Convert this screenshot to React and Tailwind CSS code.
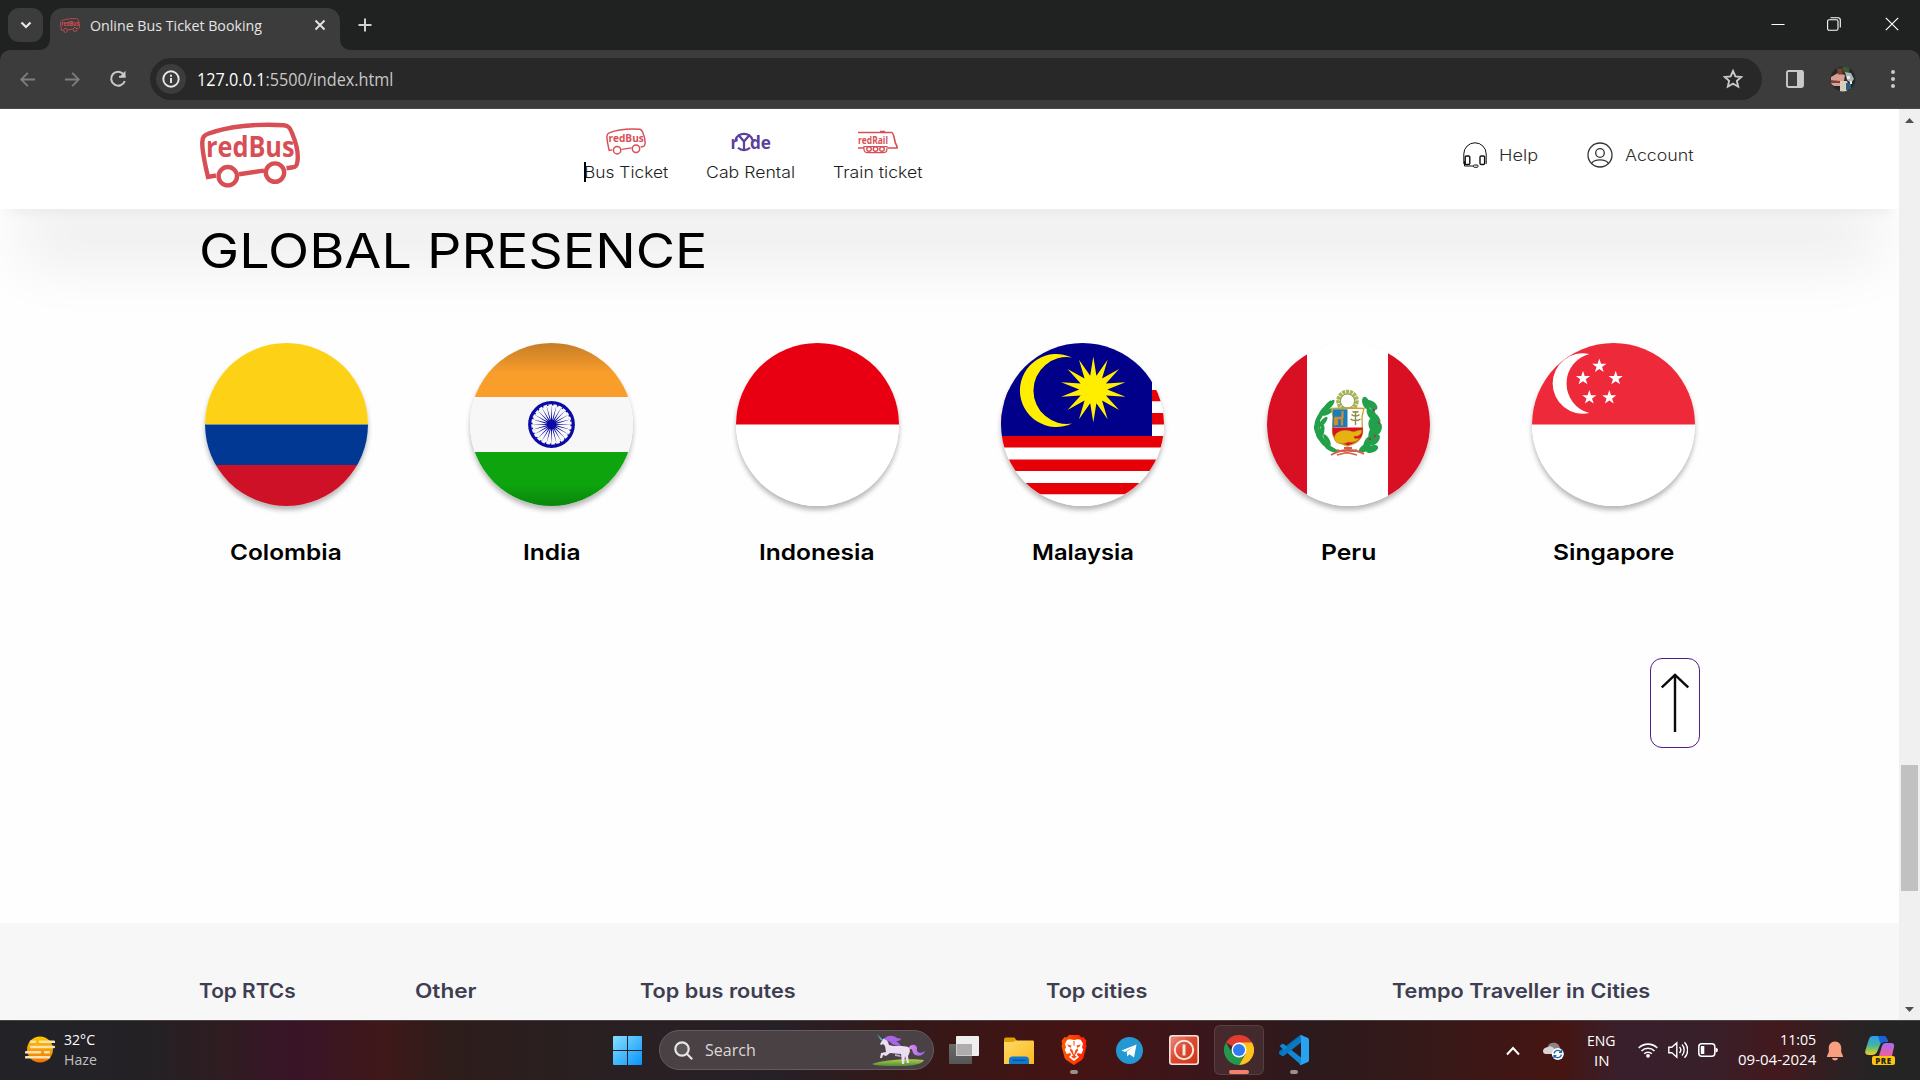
import { useLayoutEffect, useRef, useState } from "react";

const UI = "font-['Open_Sans','Noto_Sans',sans-serif]";
const BRAND = "font-[Inter,sans-serif]";

/* One line of text, stretched horizontally to an exact width. */
function Fit({ w, className = "", children }) {
  const ref = useRef(null);
  const [scale, setScale] = useState(1);
  useLayoutEffect(() => {
    const measure = () => {
      const natural = ref.current ? ref.current.offsetWidth : 0;
      if (natural) setScale(w / natural);
    };
    measure();
    document.fonts.ready.then(measure);
  }, [w]);
  return (
    <span className={`block shrink-0 whitespace-nowrap ${className}`} style={{ width: w }}>
      <span ref={ref} className="inline-block origin-left align-top" style={{ transform: `scaleX(${scale})` }}>
        {children}
      </span>
    </span>
  );
}

function star(cx, cy, points, outer, inner) {
  const out = [];
  for (let i = 0; i < points * 2; i++) {
    const r = i % 2 ? inner : outer;
    const a = (Math.PI * i) / points - Math.PI / 2;
    out.push(`${(cx + r * Math.cos(a)).toFixed(2)},${(cy + r * Math.sin(a)).toFixed(2)}`);
  }
  return out.join(" ");
}

function BusLogo({ className, thin }) {
  const sw = thin ? 3.6 : 4.4;
  return (
    <svg className={className} viewBox="0 0 100 66" preserveAspectRatio="none" fill="none" stroke="#d84e55" strokeWidth={sw}>
      <path d="M16 53.5 L8 55 C4 38 2 27 2.3 20 C2.6 15 4 13.5 8 11.8 C28 4 58 1.5 84 3.2 C88.5 3.6 90 6 92 11 C97 23 98.5 32 97.5 39 C97 43.5 96 45 93 45.3 L86.5 46.2" />
      <path d="M39 52.3 L64 48.6" />
      <circle cx="27.8" cy="54.2" r="9.2" />
      <circle cx="75" cy="50.6" r="9.2" />
      <text x="6" y="34.8" fill="#d84e55" stroke="none" fontFamily="Open Sans" fontWeight="700" fontSize="28" textLength="88.5" lengthAdjust="spacingAndGlyphs">
        redBus
      </text>
    </svg>
  );
}

function RydeLogo() {
  return (
    <svg className="h-[27px] w-[42px]" viewBox="0 0 42 27">
      <g fill="#5b3f99" fontFamily="Open Sans" fontWeight="700">
        <text x="0.5" y="21" fontSize="17" textLength="7.5" lengthAdjust="spacingAndGlyphs">r</text>
        <text x="20" y="21" fontSize="17" textLength="21" lengthAdjust="spacingAndGlyphs">de</text>
      </g>
      <g fill="none" stroke="#5b3f99" strokeWidth="2.2">
        <path d="M5.500 12a9 9 0 0 1 17 0M8 19.800a9 9 0 0 0 12 0" />
        <path d="M8.500 7 14 13.500 19.500 7M14 13v9" />
      </g>
    </svg>
  );
}

function RailLogo() {
  return (
    <svg className="h-[27px] w-[40px]" viewBox="0 0 40 27">
      <text x="0" y="16.3" fill="#d84e55" fontFamily="Open Sans" fontWeight="700" fontSize="10.5" textLength="30" lengthAdjust="spacingAndGlyphs">redRail</text>
      <g fill="none" stroke="#d84e55" strokeWidth="1.7">
        <path d="M0 4.500h33.500c2 0 2.600 5 3.600 9.500.8 3 2 3 2 6H30M0 20h6" />
        <path d="M22 3.600h5" />
        <path d="M6 18.500h23v2.500c0 3-1.500 3.700-4 3.700H10c-2.500 0-4-.7-4-3.700z" strokeWidth="1.200" />
        <circle cx="11" cy="21" r="2.300" strokeWidth="1.400" />
        <circle cx="17.500" cy="21" r="2.300" strokeWidth="1.400" />
        <circle cx="24" cy="21" r="2.300" strokeWidth="1.400" />
      </g>
    </svg>
  );
}

function HeadsetIcon() {
  return (
    <svg className="h-[26px] w-6 shrink-0" viewBox="0 0 24 26" fill="none" stroke="#111" strokeWidth="1">
      <path d="M.8 22V12a11.200 11.200 0 0 1 22.400 0v10" />
      <rect x="2.200" y="14" width="4.600" height="8.500" rx="1.300" strokeWidth="1.400" />
      <rect x="17" y="14" width="4.600" height="8.500" rx="1.300" strokeWidth="1.400" />
      <path d="M1.500 19v5h9" />
      <rect x="10.500" y="23" width="4.500" height="2.300" rx="1" />
    </svg>
  );
}

function UserIcon() {
  return (
    <svg className="h-[26px] w-[26px] shrink-0" viewBox="0 0 26 26" fill="none" stroke="#333" strokeWidth="1.300">
      <circle cx="13" cy="13" r="12" />
      <circle cx="13" cy="11" r="4.300" />
      <path d="M4.500 21.400c3-4.800 14-4.800 17 0" />
    </svg>
  );
}

/* ---------- browser chrome ---------- */

function TabStrip() {
  return (
    <div className="flex h-[50px] items-start bg-[#202221] text-white">
      <div className="mt-2 ml-2 flex h-[34px] w-[35px] shrink-0 items-center justify-center rounded-[11px] bg-[#3c3c3c]">
        <svg className="h-3 w-3" viewBox="0 0 12 12" fill="none" stroke="#e8e8e8" strokeWidth="2.200"><path d="m1.500 3.500 4.500 4.500 4.500-4.500" /></svg>
      </div>
      <svg className="mt-[38px] -ml-[5px] h-3 w-3 shrink-0" viewBox="0 0 12 12"><path d="M12 0v12H0Q12 12 12 0" fill="#3c3c3c" /></svg>
      <div className="mt-[8px] flex h-[42px] w-[290px] shrink-0 items-center rounded-t-[13px] bg-[#3c3c3c] pb-2">
        <BusLogo className="ml-[10px] h-[15px] w-5 shrink-0" thin />
        <Fit w={172} className={`ml-[10px] text-[14.800px] leading-5 text-[#e4e4e4] ${UI}`}>Online Bus Ticket Booking</Fit>
        <svg className="ml-[52px] h-3 w-3" viewBox="0 0 12 12" stroke="#e4e4e4" strokeWidth="1.900"><path d="m1.500 1.500 9 9m0-9-9 9" /></svg>
      </div>
      <svg className="mt-[38px] h-3 w-3 shrink-0" viewBox="0 0 12 12"><path d="M0 0v12h12Q0 12 0 0" fill="#3c3c3c" /></svg>
      <svg className="mt-[18px] ml-[6px] h-[14px] w-[14px]" viewBox="0 0 14 14" stroke="#d0d0d0" strokeWidth="2"><path d="M7 .5v13M.5 7h13" /></svg>
      <div className="mt-[17px] ml-auto flex items-center text-white">
        <svg className="h-[14px] w-[14px]" viewBox="0 0 14 14" stroke="currentColor"><path d="M.5 7.500h13" /></svg>
        <svg className="ml-[42px] h-[14px] w-[14px]" viewBox="0 0 14 14" fill="none" stroke="currentColor" strokeWidth="1.100"><rect x=".6" y="2.800" width="10.400" height="10.400" rx="1.500" /><path d="M3.500.7h7.500a2.300 2.300 0 0 1 2.300 2.300v7.500" /></svg>
        <svg className="mr-[21px] ml-[44px] h-[14px] w-[14px]" viewBox="0 0 14 14" stroke="currentColor" strokeWidth="1.200"><path d="m.8.800 12.400 12.400m0-12.400L.8 13.200" /></svg>
      </div>
    </div>
  );
}

function Toolbar() {
  return (
    <div className="bg-[#202221]">
      <div className="flex h-[59px] items-center rounded-t-[10px] border-b border-[#4a4a4a] bg-[#3c3c3c]">
        <svg className="ml-5 h-[15px] w-[15px]" viewBox="0 0 15 15" fill="none" stroke="#7e7e7e" strokeWidth="1.800"><path d="M15 7.500H1.500M7.800.9 1.200 7.500l6.600 6.600" /></svg>
        <svg className="ml-[30px] h-[15px] w-[15px]" viewBox="0 0 15 15" fill="none" stroke="#7e7e7e" strokeWidth="1.800"><path d="M0 7.500h13.500M7.200.9l6.600 6.600-6.600 6.600" /></svg>
        <svg className="ml-[29px] h-[18px] w-[18px]" viewBox="0 0 18 18" fill="none" stroke="#c9c9c9" strokeWidth="2"><path d="M14.800 4.500A7 7 0 1 0 15.800 11" /><path d="M16.500.8v6.700H9.800z" fill="#c9c9c9" stroke="none" /><path d="M10 6.700h6.500" strokeWidth="1.700" /></svg>
        <div className="ml-[23px] flex h-[42px] w-[1612px] items-center rounded-full bg-[#282828]">
          <div className="ml-[6px] flex h-[30px] w-[30px] items-center justify-center rounded-full bg-[#3c3c3c]">
            <svg className="h-[18px] w-[18px]" viewBox="0 0 18 18" fill="none" stroke="#e8e8e8" strokeWidth="1.900"><circle cx="9" cy="9" r="7.700" /><path d="M9 8v5M9 4.700v2" /></svg>
          </div>
          <Fit w={196.500} className={`ml-[11px] text-[18px] leading-6 text-[#c7c7c7] ${UI}`}>
            <span className="text-white">127.0.0.1</span>:5500/index.html
          </Fit>
          <svg className="mr-[19px] ml-auto h-5 w-5" viewBox="0 0 20 20" fill="none" stroke="#c9c9c9" strokeWidth="1.900"><polygon points="10,2 12.400,7.400 18.300,8 13.900,11.900 15.200,17.700 10,14.700 4.800,17.700 6.100,11.900 1.700,8 7.600,7.400" /></svg>
        </div>
        <svg className="ml-6 h-[18px] w-[18px]" viewBox="0 0 18 18"><rect x="1" y="1" width="16" height="16" rx="1.500" fill="none" stroke="#c9c9c9" strokeWidth="1.900" /><path d="M11 1h6v16h-6z" fill="#c9c9c9" /></svg>
        <svg className="ml-[26px] h-[26px] w-[26px]" viewBox="0 0 26 26">
          <defs><clipPath id="avatar"><circle cx="13" cy="13" r="12.500" /></clipPath></defs>
          <g clipPath="url(#avatar)">
            <path fill="#252a26" d="M0 0h26v26H0z" />
            <path fill="#3e5a34" d="M12 0h8l-1 6-5 1z" />
            <path fill="#d8a094" d="M1 11 8 7l7 2-1 6-4 5H4l-3-2z" />
            <path fill="#7b4234" d="M7 2.500h5.500v6H8zM0 14l10 1v2L1 17z" />
            <path fill="#a9b6b4" d="m15 6 6 1 3 6-3 4-4-3z" />
            <path fill="#d7cfb9" d="M10 15h7l2 6-3 5h-6z" />
            <path fill="#2d5b80" d="M16 17h5v6l-5 1z" />
            <path fill="#e8e8e4" d="M17 10h3v3h-3zM20 15h2v3h-2z" />
          </g>
        </svg>
        <svg className="ml-[35px] h-[18px] w-1" viewBox="0 0 4 18" fill="#c9c9c9"><circle cx="2" cy="2" r="2" /><circle cx="2" cy="9" r="2" /><circle cx="2" cy="16" r="2" /></svg>
      </div>
    </div>
  );
}

function Scrollbar() {
  return (
    <div className="flex w-[21px] flex-col items-center bg-[#f0f0f0]">
      <svg className="mt-[9px] h-[5px] w-[9px]" viewBox="0 0 9 5"><path d="M4.500 0 9 5H0z" fill="#505050" /></svg>
      <div className="mt-[642px] h-[126px] w-[17px] bg-[#c1c1c1]" />
      <svg className="mt-[116px] h-[5px] w-[9px]" viewBox="0 0 9 5"><path d="M4.500 5 9 0H0z" fill="#505050" /></svg>
    </div>
  );
}

/* ---------- page ---------- */

function NavItem({ icon, w, label }) {
  return (
    <div className="flex flex-col items-center gap-2">
      {icon}
      <Fit w={w} className={`text-[15.500px] leading-5 font-light text-[#1d1d1d] ${BRAND}`}>{label}</Fit>
    </div>
  );
}

function Header() {
  return (
    <header className="relative z-10 flex h-[100px] shrink-0 items-start bg-white pl-[200px] shadow-[0_75px_60px_-20px_rgba(0,0,0,0.07),0_10px_12px_-7px_rgba(0,0,0,0.06)]">
      <BusLogo className="mt-[13px] h-[66px] w-[100px]" />
      <nav className="relative mt-[19px] ml-[284px] flex gap-[38px]">
        <NavItem w={84} label="Bus Ticket" icon={<BusLogo className="h-[27px] w-10" thin />} />
        <NavItem w={89} label="Cab Rental" icon={<RydeLogo />} />
        <NavItem w={90} label="Train ticket" icon={<RailLogo />} />
        <div className="absolute top-[34px] left-0 h-5 w-[2px] bg-black" />
      </nav>
      <div className={`mt-[33px] ml-[540px] flex items-center text-[16px] leading-[26px] font-light text-[#2e2e2e] ${BRAND}`}>
        <HeadsetIcon />
        <Fit w={38.500} className="ml-[12px]">Help</Fit>
        <div className="ml-[49px] flex items-center gap-3">
          <UserIcon />
          <Fit w={69}>Account</Fit>
        </div>
      </div>
    </header>
  );
}

function Colombia() {
  return (
    <>
      <path fill="#fdd116" d="M0 0h163v81.500H0z" />
      <path fill="#003893" d="M0 81.500h163v41H0z" />
      <path fill="#ce1126" d="M0 122h163v41H0z" />
    </>
  );
}

function India() {
  return (
    <>
      <defs>
        <linearGradient id="saffron" x2="0" y2="1"><stop stopColor="#c67d27" /><stop offset=".55" stopColor="#f99d2b" /></linearGradient>
        <linearGradient id="green" x2="0" y2="1"><stop offset=".6" stopColor="#0da40e" /><stop offset="1" stopColor="#0a850d" /></linearGradient>
      </defs>
      <path fill="#f7f7f7" d="M0 0h163v163H0z" />
      <path fill="url(#saffron)" d="M0 0h163v54H0z" />
      <path fill="url(#green)" d="M0 109h163v54H0z" />
      <circle cx="81.500" cy="81.500" r="21.800" fill="none" stroke="#0b0ba3" strokeWidth="3.200" />
      <circle cx="81.500" cy="81.500" r="19.800" fill="none" stroke="#0b0ba3" strokeWidth="1.600" strokeDasharray="1.500 3.680" />
      <polygon points={star(81.5, 81.5, 24, 20, 4.4)} fill="#0b0ba3" />
      <circle cx="81.500" cy="81.500" r="4.500" fill="#0b0ba3" />
    </>
  );
}

function Indonesia() {
  return (
    <>
      <path fill="#fff" d="M0 0h163v163H0z" />
      <path fill="#e80012" d="M0 0h163v81.500H0z" />
    </>
  );
}

function Malaysia() {
  return (
    <>
      <path fill="#fff" d="M0 0h163v163H0z" />
      <path fill="#e80008" d="M0 47h163v11.200H0zM0 70h163v11.500H0zM0 93h163v11.500H0zM0 116.500h163V128H0zM0 140h163v11.300H0z" />
      <path fill="#00008b" d="M0 0h151v93H0z" />
      <path fill="#ffee00" d="M71 14.500A36.500 36.500 0 1 0 71 80.500A33.400 33.400 0 1 1 71 14.500" />
      <polygon points={star(92.3, 46.5, 14, 33, 14)} fill="#ffee00" />
    </>
  );
}

function Peru() {
  const left = [[63, 62, -50], [57, 67, -45], [53, 73, -60], [50, 80, -80], [50, 88, -110], [53, 95, -125], [58, 101, -140], [64, 106, -155], [61, 69, -30], [56, 79, -50], [55, 88, -80], [60, 97, -120]];
  const right = [[99, 60, 70], [105, 62, 40], [104, 71, 60], [109, 76, 60], [105, 82, 80], [111, 86, 110], [105, 91, 100], [108, 97, 130], [101, 99, 120], [98, 105, 150], [105, 106, 160]];
  return (
    <>
      <path fill="#fff" d="M0 0h163v163H0z" />
      <path fill="#d91023" d="M0 0h40v163H0zM121 0h42v163h-42z" />
      <g fill="none" stroke="#22a04a" strokeWidth="2"><path d="M64 58C48 70 46 96 70 108" /><path d="M100 58c14 14 12 42-8 50" /></g>
      {left.map(([x, y, a], i) => <ellipse key={i} cx={x} cy={y} rx="6.500" ry="2.300" fill="#22a04a" transform={`rotate(${a} ${x} ${y})`} />)}
      {right.map(([x, y, a], i) => <ellipse key={i} cx={x} cy={y} rx="6.500" ry="3.500" fill="#22a04a" transform={`rotate(${a} ${x} ${y})`} />)}
      <g fill="#a3384f"><circle cx="107" cy="67" r="1.200" /><circle cx="112" cy="80" r="1.200" /><circle cx="103" cy="96" r="1.200" /><circle cx="108" cy="93" r="1.200" /></g>
      <circle cx="80.500" cy="58" r="9" fill="none" stroke="#a9b457" strokeWidth="4.600" strokeDasharray="3 .7" />
      <circle cx="80.500" cy="58" r="7" fill="none" stroke="#7d9a45" strokeWidth=".8" />
      <path d="M64.500 65.500 80.500 65l16.500.5-2 8 .5 16q-1 10-15 13.500-14-3.500-15-13.500l.5-16z" fill="#fff" stroke="#c9a22b" strokeWidth="1.300" />
      <path d="M65.500 66.300h15v18h-15l.5-10z" fill="#1b7db5" />
      <path d="M65.500 84.500h30.200v4q-.5 10-15 13.700-14.500-3.700-15.200-13.700z" fill="#d91023" />
      <path d="M67.500 94c1-6 10-8 16-6 4 2 6-1 11-1 1 3-2 7-7 6-2 3 2 3 5 2-2 4-8 5-11 4-6 3-15 2-14-5" fill="#e5b211" stroke="#b5811b" strokeWidth=".5" />
      <path d="M75.500 68v7m-8 0h8m-7.500 0v7.500m2-7.500v7m5-7v7.500" stroke="#c98b3c" strokeWidth="2.300" fill="none" />
      <path d="M88.500 68v14m-4-10.500c2 2 6 2 8 0m-9 4.500c2 2 8 2 10 0m-8-7.500c2 1 4 1 6 0" stroke="#8c8a44" strokeWidth="1.400" fill="none" />
      <path d="M64 112c7-4 12-5 17-5 6 0 11 1 16 4M70 107l20 5m-20 0 20-5M77 105l8 0" stroke="#d2604a" strokeWidth="1.800" fill="none" />
    </>
  );
}

function Singapore() {
  const stars = [[67.3, 23], [51, 35.3], [83.7, 35.3], [57.3, 54.5], [77.3, 54.5]];
  return (
    <>
      <path fill="#fff" d="M0 0h163v163H0z" />
      <path fill="#ee2939" d="M0 0h163v81.500H0z" />
      <path fill="#fff" d="M57.300 11A30.200 30.200 0 1 0 57.300 70A30.500 30.500 0 0 1 57.300 11" />
      {stars.map(([x, y], i) => <polygon key={i} points={star(x, y, 5, 7.5, 2.9)} fill="#fff" />)}
    </>
  );
}

const countries = [
  { name: "Colombia", w: 112, flag: <Colombia /> },
  { name: "India", w: 58, flag: <India /> },
  { name: "Indonesia", w: 116, flag: <Indonesia /> },
  { name: "Malaysia", w: 101.5, flag: <Malaysia /> },
  { name: "Peru", w: 55, flag: <Peru /> },
  { name: "Singapore", w: 121, flag: <Singapore /> },
];

function GlobalPresence() {
  return (
    <section className={`flex grow flex-col bg-[#fefefe] pr-[199px] pl-[200px] text-black ${BRAND}`}>
      <Fit w={508} className="mt-3 -ml-px text-[48.500px] leading-[60px]">GLOBAL PRESENCE</Fit>
      <div className="mt-[62px] flex justify-between">
        {countries.map((c) => (
          <div key={c.name} className="flex w-[172px] flex-col items-center">
            <div className="h-[163px] w-[163px] overflow-hidden rounded-full bg-white shadow-[0_4px_5px_rgba(0,0,0,0.28)]">
              <svg className="h-full w-full" viewBox="0 0 163 163">{c.flag}</svg>
            </div>
            <Fit w={c.w} className="mt-8 text-[22px] leading-7 font-semibold">{c.name}</Fit>
          </div>
        ))}
      </div>
      <div className="mt-[92px] flex h-[90px] w-[50px] items-center justify-center self-end rounded-xl border border-[#551a8b] bg-white">
        <svg className="h-[60px] w-7" viewBox="0 0 28 60" fill="none" stroke="#0b0b0b" strokeWidth="2.400"><path d="M14 1v58M.8 14.500 14 2l13.200 12.500" /></svg>
      </div>
    </section>
  );
}

function FooterLinks() {
  return (
    <footer className={`flex h-[97px] shrink-0 bg-[#f7f7f7] pt-[54px] pl-[199px] text-[20px] leading-[28px] font-semibold text-[#3e3e52] ${BRAND}`}>
      <Fit w={97}>Top RTCs</Fit>
      <Fit w={61} className="ml-[119px]">Other</Fit>
      <Fit w={156} className="ml-[164px]">Top bus routes</Fit>
      <Fit w={101} className="ml-[250px]">Top cities</Fit>
      <Fit w={258} className="ml-[245px]">Tempo Traveller in Cities</Fit>
    </footer>
  );
}

/* ---------- taskbar ---------- */

function Unicorn() {
  return (
    <svg className="h-8 w-[54px]" viewBox="0 0 54 32">
      <defs><linearGradient id="grass" x2="0" y2="1"><stop stopColor="#b4cf45" /><stop offset="1" stopColor="#4f8d3a" /></linearGradient>
        <linearGradient id="tail"><stop stopColor="#e48af0" /><stop offset="1" stopColor="#8a63ec" /></linearGradient></defs>
      <path d="M0 30c10-4 38-6 52-4-2 4-10 6-26 6-12 0-22 0-26-2" fill="url(#grass)" />
      <path d="M37 13c4-5 9-1 8 2-1 4 4 5 8 2-1 5-8 6-11 3-3-4 0-5-5-5z" fill="url(#tail)" />
      <path d="M11 5c3-1 5 2 6 6 5 2 15 0 19 2 3 2 2 6 0 9l1 7h-2l-2-7-1 8h-2l-1-10-11-1-4 3-3-1-1 3h-2l1-5 5-1-1-6-2-2-2 1-1-1z" fill="#ecdcf4" />
      <path d="M23 20l5 1 1 2-6-1z" fill="#b9a6cc" />
      <path d="M12 5c3-4 9-4 13-1 3 1 4 0 4 1-1 2-3 2-5 2 2 1 4 3 5 5-5 0-8-1-11-4z" fill="#a964e6" />
      <path d="m5 0 6 6-2 .5z" fill="#58b8d4" />
    </svg>
  );
}

function FolderIcon() {
  return (
    <svg className="h-[27px] w-[30px]" viewBox="0 0 30 27">
      <defs><linearGradient id="folder" x2="1" y2="1"><stop stopColor="#ffd968" /><stop offset="1" stopColor="#fab91c" /></linearGradient></defs>
      <path d="M0 2.500Q0 .5 2 .5h8.500L13 4v5H0z" fill="#e0a000" />
      <path d="M0 5h9l3-1.500h17q1 0 1 1.500v22H0z" fill="url(#folder)" />
      <path d="M5 27v-4q0-3.500 3.500-3.500h13Q25 19.500 25 23v4z" fill="#0f78d0" />
      <path d="M8.500 23.300h13" stroke="#0a4f94" strokeWidth="1.200" />
    </svg>
  );
}

function BraveIcon() {
  return (
    <svg className="h-[30px] w-[26px]" viewBox="0 0 26 30">
      <defs><linearGradient id="brave"><stop stopColor="#ff5a00" /><stop offset="1" stopColor="#ff2000" /></linearGradient></defs>
      <path d="M8 0h10l2.500 2.500 2-.5 3 4-.8 3 .8 2-3 11.500Q22 24 20 25.500L13 30l-7-4.500Q4 24 3.500 22.500L.5 11l.8-2-.8-3 3-4 2 .5z" fill="url(#brave)" />
      <path d="M9 4.200 13 5l4-.8 2.700.6 2.300 3.700-1 4 1.300 2-2 4.500-3.500-1-1 1.700L18 22l-5 4-5-4 2.200-2.300-1-1.700-3.500 1-2-4.500 1.300-2-1-4 2.300-3.700z" fill="#fff" />
      <path d="m6 9.500 4.500 1-1 3 2 1.500L13 20l1.500-5 2-1.500-1-3 4.500-1-2 2.500-1.500.5.500 3-1.700 2.800-1.300 2.200h-2l-1.300-2.200-1.700-2.800.5-3L8 12zM10 21.500l3-1.300 3 1.300-3 2.200zM12.400 6h1.200l-.2 5h-.8z" fill="#fb4a15" />
    </svg>
  );
}

function ChromeIcon() {
  return (
    <svg className="h-[30px] w-[30px] shrink-0" viewBox="0 0 48 48">
      <path d="M24 24 3.200 12A24 24 0 0 1 44.800 12z" fill="#e33b2e" />
      <path d="M24 12h20.800A24 24 0 0 1 24 48l10.400-18z" fill="#fcc31e" />
      <path d="M13.600 30 3.200 12A24 24 0 0 0 24 48l10.400-18z" fill="#239a4b" />
      <circle cx="24" cy="24" r="12" fill="#fff" />
      <circle cx="24" cy="24" r="9.600" fill="#2e7cf0" />
    </svg>
  );
}

function CodeIcon() {
  return (
    <svg className="h-[30px] w-[30px]" viewBox="0 0 30 30">
      <path d="M22 0 4 17l-3 2.300q-1 .4-1-1.800l.2-1.200L18.500 2z" fill="#0070bb" />
      <path d="M.5 11 3 9q1-.6 2 .2L24 24l-2 6z" fill="#1287d2" />
      <path d="M.5 19 3 21q1 .6 2-.2L24 6l-2-6z" fill="#0a78c4" />
      <path d="m22 0 7 3q1 .5 1 2v20q0 1.500-1 2l-7 3q-1 0-1.500-1 1.500 0 1.500-2V3q0-2-1.500-2z" fill="#27a3f2" />
    </svg>
  );
}

function AppSlot({ children, indicator }) {
  return (
    <div className="flex h-[50px] w-[50px] flex-col items-center pt-[10px]">
      <div className="flex h-[30px] items-center">{children}</div>
      {indicator && <div className="mt-[5px] h-1 w-2 rounded-full bg-[#9b9090]" />}
    </div>
  );
}

function Taskbar() {
  return (
    <div className={`flex h-[60px] shrink-0 items-center border-t border-[#4b4345] bg-[linear-gradient(90deg,#232327_0px,#242125_150px,#301c21_230px,#391428_290px,#3f1819_385px,#2d1d1b_450px,#292022_600px,#262027_780px,#341818_900px,#451313_1075px,#3b161b_1190px,#2c1a1c_1310px,#34191a_1400px,#451512_1560px,#391f2b_1620px,#38202b_1700px,#42191d_1780px,#2a2224_1850px,#242424_1880px,#242424_1920px)] text-white ${UI}`}>
      <svg className="-mt-px ml-[25px] h-[30px] w-[30px]" viewBox="0 0 30 30">
        <defs><linearGradient id="sun" x2="0" y2="1"><stop stopColor="#ffc800" /><stop offset="1" stopColor="#f07406" /></linearGradient></defs>
        <circle cx="15" cy="14.500" r="13" fill="url(#sun)" />
        <path d="M6 6.800h4M15 6.800h14M6 12h23M1 17.300h14M20 17.300h4M1 22.300h23" stroke="#f6e2b4" strokeWidth="2.500" strokeLinecap="round" />
      </svg>
      <div className="mb-1 ml-[9px] text-[15px] leading-5">
        <Fit w={31}>32°C</Fit>
        <Fit w={33} className="text-[#c3bfc1]">Haze</Fit>
      </div>

      <svg className="ml-[516px] h-[29px] w-[29px]" viewBox="0 0 29 29">
        <defs><linearGradient id="win" gradientUnits="userSpaceOnUse" x1="0" y1="0" x2="29" y2="29"><stop stopColor="#86e0ff" /><stop offset="1" stopColor="#0893fb" /></linearGradient></defs>
        <path d="M0 1q0-1 1-1h13v14H0zM15 0h13q1 0 1 1v13H15zM0 15h14v14H1q-1 0-1-1zM15 15h14v13q0 1-1 1H15z" fill="url(#win)" />
      </svg>
      <div className="-mt-px ml-[17px] flex h-10 w-[275px] items-center rounded-full border border-[#665a5e] bg-[#4a4144] pr-[7px] pl-[14px]">
        <svg className="h-[19px] w-[19px]" viewBox="0 0 19 19" fill="#5c5558" stroke="#e6e6e6" strokeWidth="2.200"><circle cx="8" cy="8" r="6.700" /><path d="m12.800 12.800 5.400 5.400" /></svg>
        <Fit w={51} className="ml-[12px] text-[17px] leading-6 text-[#dcd8da]">Search</Fit>
        <div className="ml-auto"><Unicorn /></div>
      </div>

      <div className="-mt-px ml-[5px] flex gap-[5px]">
        <AppSlot>
          <svg className="h-7 w-[30px]" viewBox="0 0 30 28">
            <defs><linearGradient id="back" x2="0" y2="1"><stop stopColor="#6a6a6a" /><stop offset="1" stopColor="#565656" /></linearGradient></defs>
            <rect y="8" width="23" height="20" rx="1" fill="url(#back)" />
            <rect x="7" width="23" height="20" rx="1" fill="#eee" />
            <path d="M7.500 8H23v11.500H7.500z" fill="#aeacac" />
          </svg>
        </AppSlot>
        <AppSlot><FolderIcon /></AppSlot>
        <AppSlot indicator><BraveIcon /></AppSlot>
        <AppSlot>
          <svg className="h-[27px] w-[27px]" viewBox="0 0 27 27">
            <circle cx="13.500" cy="13.500" r="13.500" fill="#2398d2" />
            <path d="M5.500 13.500 20.500 7.500 18 20.500l-4.500-3.200-2.300 2.200-.5-4.700 6.800-5L9 15z" fill="#fff" />
          </svg>
        </AppSlot>
        <AppSlot>
          <svg className="h-[30px] w-[30px]" viewBox="0 0 30 30">
            <defs><linearGradient id="rec" x2="1" y2="1"><stop stopColor="#ec8f83" /><stop offset=".45" stopColor="#dc4c32" /><stop offset="1" stopColor="#c93310" /></linearGradient></defs>
            <rect x=".8" y=".8" width="28.400" height="28.400" rx="2.500" fill="url(#rec)" stroke="#f5e4e0" strokeWidth="1.600" />
            <circle cx="15" cy="15" r="9.200" fill="none" stroke="#f7e4df" strokeWidth="2" />
            <path d="M15 9.500v11" stroke="#f7e4df" strokeWidth="3" />
          </svg>
        </AppSlot>
        <div className="flex h-[50px] w-[50px] flex-col items-center rounded-md border border-white/10 bg-white/8 pt-[9px]">
          <ChromeIcon />
          <div className="mt-[5px] h-1 w-5 shrink-0 rounded-full bg-[#f4826a]" />
        </div>
        <AppSlot indicator><CodeIcon /></AppSlot>
      </div>

      <svg className="ml-[187px] h-[10px] w-[14px]" viewBox="0 0 14 10" fill="none" stroke="#fff" strokeWidth="2"><path d="m1 8.500 6-6.500 6 6.500" /></svg>
      <svg className="ml-[23px] h-5 w-[21px]" viewBox="0 0 21 20">
        <path d="M5 5a6.500 6.500 0 0 1 12 2v6H6z" fill="#8d8385" />
        <path d="M4.500 6q4-2 7 2l2 5H3Q0 13 0 10t4.500-4" fill="#d9d4d4" />
        <circle cx="14.800" cy="13" r="6" fill="#fff" />
        <path d="M11 12.500a4 4 0 0 1 7-1.700m.5 2.700a4 4 0 0 1-7 1.700M18.500 8.700v2.600H16M11 17.300v-2.600h2.500" fill="none" stroke="#1667b8" strokeWidth="1.300" />
      </svg>
      <div className="mb-0.5 ml-[23px] flex flex-col items-center text-[15px] leading-5">
        <Fit w={29}>ENG</Fit>
        <Fit w={15}>IN</Fit>
      </div>
      <svg className="mb-px ml-[22px] h-4 w-5" viewBox="0 0 20 16" fill="none" stroke="#fff" strokeWidth="1.600">
        <path d="M.7 6a13.200 13.200 0 0 1 18.600 0M3.500 9a9.200 9.200 0 0 1 13 0M6.200 11.800a5.400 5.400 0 0 1 7.600 0" /><circle cx="10" cy="13.800" r="1.900" fill="#fff" stroke="none" />
      </svg>
      <svg className="mb-px ml-[10px] h-[18px] w-5" viewBox="0 0 20 18" fill="none" stroke="#fff" strokeWidth="1.400">
        <path d="M.8 6.300h3l5-4.500v14.400l-5-4.500h-3zM11.500 6a4.500 4.500 0 0 1 0 6M14 3.500a8 8 0 0 1 0 11M16.500 1.200a11.200 11.200 0 0 1 0 15.600" />
      </svg>
      <svg className="mb-px ml-[10px] h-[14px] w-5" viewBox="0 0 20 14"><rect x=".8" y=".8" width="16" height="12.400" rx="3" fill="none" stroke="#fff" strokeWidth="1.500" /><path d="M2.800 3h3.500v8H2.800z" fill="#fff" /><path d="M17.500 4.500Q20 5 20 7t-2.500 2.500z" fill="#fff" /></svg>
      <div className="mb-1 ml-5 flex flex-col items-end text-[15px] leading-5">
        <Fit w={36}>11:05</Fit>
        <Fit w={78}>09-04-2024</Fit>
      </div>
      <svg className="ml-[11px] h-5 w-4" viewBox="0 0 16 20" fill="#f99e80"><path d="M8 .5c4 0 6.200 3 6.200 6.500v4L16 15v1H0v-1l1.800-4V7C1.800 3.500 4 .5 8 .5M5 17h6q-.5 2.500-3 2.500T5 17" /></svg>
      <div className="relative ml-[22px] h-[29px] w-[30px]">
        <svg className="h-[29px] w-[30px]" viewBox="0 0 30 29">
          <defs>
            <linearGradient id="cpA" x2="0" y2="1"><stop stopColor="#2d9bf0" /><stop offset=".5" stopColor="#43b79a" /><stop offset="1" stopColor="#f3d011" /></linearGradient>
            <linearGradient id="cpB" x2="0" y2="1"><stop stopColor="#a86af0" /><stop offset="1" stopColor="#f0609a" /></linearGradient>
          </defs>
          <path d="M8 0h10q3 0 4 3l1 3h-4q-3 0-4 3l-3 7q-1.500 3-5 3H4q-5 0-3.500-5L4 3Q5 0 8 0" fill="url(#cpA)" />
          <path d="M13 0h5q3 0 4 3l1 3h-4q-2.500 0-3.500 2z" fill="#1b62d8" />
          <path d="M20 7h6q4 0 3 4l-2 9H14l3-10q1-3 3-3" fill="url(#cpB)" />
        </svg>
        <div className="absolute right-0 bottom-0 flex h-[9px] w-[23px] items-center justify-center rounded-xs bg-[#fdc50b] text-[8px] leading-[9px] font-extrabold tracking-[0.500px] text-[#222]">PRE</div>
      </div>
    </div>
  );
}

export default function App() {
  return (
    <div className="flex h-[1080px] w-[1920px] flex-col overflow-hidden bg-white">
      <TabStrip />
      <Toolbar />
      <div className="flex h-[911px] shrink-0">
        <main className="flex w-[1899px] flex-col overflow-hidden">
          <Header />
          <GlobalPresence />
          <FooterLinks />
        </main>
        <Scrollbar />
      </div>
      <Taskbar />
    </div>
  );
}
